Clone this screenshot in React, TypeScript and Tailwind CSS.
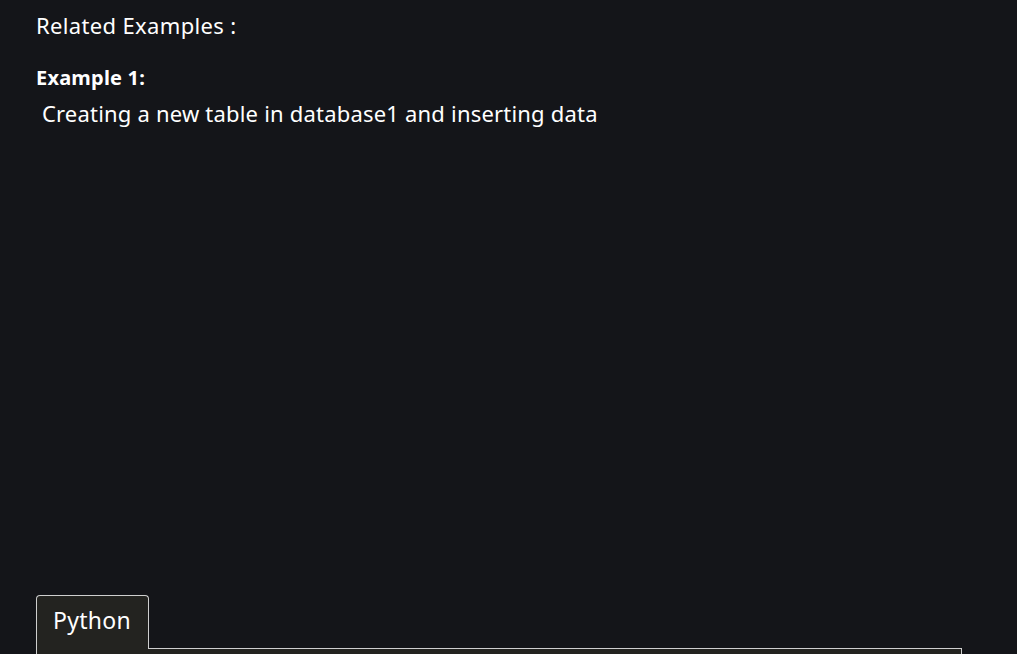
export default function App() {
  return (
    <div
      className="min-h-screen w-full overflow-hidden bg-[#141519] text-white"
      style={{ fontFamily: '"Noto Sans", "Open Sans", sans-serif' }}
    >
      <div className="h-[654px] overflow-hidden px-[36px] pt-[11px]">
        <p className="text-[22px] leading-[28px] tracking-[0.35px]">Related Examples :</p>
        <p className="mt-[27px] text-[20px] font-bold leading-[24px] tracking-[0.2px]">Example 1:</p>
        <p className="mt-[9px] text-[22px] leading-[28px] tracking-[0.2px] whitespace-pre"> Creating a new table in database1 and inserting data</p>

        {/* ad space */}
        <div className="h-[468px]" />

        {/* Code tabs */}
        <div className="w-[926px]">
          <div className="relative z-10 -mb-px flex">
            <button className="flex h-[54px] items-center rounded-t-[4px] border border-b-0 border-[#cfcfcf] bg-[#232320] pl-[16px] pr-[17px] pb-[4px] text-[23px] tracking-[0.3px] text-white">
              Python
            </button>
          </div>
          <div className="h-[120px] border border-[#cfcfcf] bg-[#232320]" />
        </div>
      </div>
    </div>
  )
}
